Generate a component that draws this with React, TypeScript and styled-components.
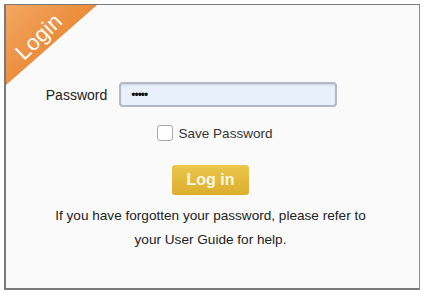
import React from 'react';
import styled, { createGlobalStyle } from 'styled-components';

const GlobalStyle = createGlobalStyle`
  html, body {
    margin: 0;
    padding: 0;
    background: #ffffff;
    font-family: "Liberation Sans", Arial, sans-serif;
  }
`;

const Page = styled.div`
  padding: 4px 0 0 4px;
  width: 426px;
  height: 297px;
  box-sizing: border-box;
`;

const Panel = styled.div`
  position: relative;
  width: 416px;
  height: 286px;
  box-sizing: border-box;
  background: #fafafa;
  border: 1px solid #7a7a7a;
  border-left-width: 2px;
  border-bottom-width: 2px;
  border-right-color: #8a8a8a;
  display: flex;
  flex-direction: column;
  align-items: center;
  padding-top: 77px;
  overflow: hidden;
`;

const Ribbon = styled.div`
  position: absolute;
  top: 0;
  left: 0;
  width: 91px;
  height: 80px;
  background: linear-gradient(135deg, #f3a864 0%, #eb8d3c 50%, #dd7424 100%);
  clip-path: polygon(0 0, 100% 0, 0 100%);
`;

const RibbonText = styled.span`
  position: absolute;
  top: 19px;
  left: 1px;
  width: 64px;
  text-align: center;
  color: #ffffff;
  font-size: 22px;
  letter-spacing: 0.3px;
  transform: rotate(-44deg);
  transform-origin: center;
`;

const FieldRow = styled.div`
  display: flex;
  align-items: center;
  gap: 12px;
  margin-right: 42px;
`;

const Label = styled.label`
  font-size: 14px;
  color: #222;
`;

const PasswordInput = styled.input`
  width: 218px;
  height: 25px;
  box-sizing: border-box;
  border: 2px solid #b4b9c4;
  border-radius: 4px;
  background: #e8f0fb;
  box-shadow: inset 0 1px 2px rgba(0, 0, 0, 0.12);
  padding: 0 10px;
  font-size: 12px;
  color: #111;
  outline: none;
  letter-spacing: -1px;
`;

const CheckRow = styled.label`
  display: flex;
  align-items: center;
  gap: 6px;
  margin-top: 18px;
  margin-left: 4px;
  font-size: 13.5px;
  color: #333;
`;

const Box = styled.span`
  width: 16px;
  height: 16px;
  box-sizing: border-box;
  border: 1px solid #a8a8a8;
  border-radius: 3px;
  background: #fff;
`;

const LoginButton = styled.button`
  margin: 24px 4px 0 0;
  width: 77px;
  height: 30px;
  border: none;
  border-radius: 3px;
  background: linear-gradient(180deg, #eac74c 0%, #dcae2c 100%);
  color: #fdf7e4;
  font-family: "Liberation Sans", Arial, sans-serif;
  font-weight: bold;
  font-size: 16px;
  cursor: pointer;
`;

const Help = styled.p`
  margin: 9px 4px 0 0;
  text-align: center;
  font-size: 13.6px;
  line-height: 24px;
  color: #222;
`;

export default function App() {
  return (
    <>
      <GlobalStyle />
      <Page>
        <Panel>
          <Ribbon>
            <RibbonText>Login</RibbonText>
          </Ribbon>
          <FieldRow>
            <Label htmlFor="pw">Password</Label>
            <PasswordInput id="pw" type="password" defaultValue="admin" />
          </FieldRow>
          <CheckRow>
            <Box />
            Save Password
          </CheckRow>
          <LoginButton>Log in</LoginButton>
          <Help>
            If you have forgotten your password, please refer to
            <br />
            your User Guide for help.
          </Help>
        </Panel>
      </Page>
    </>
  );
}
